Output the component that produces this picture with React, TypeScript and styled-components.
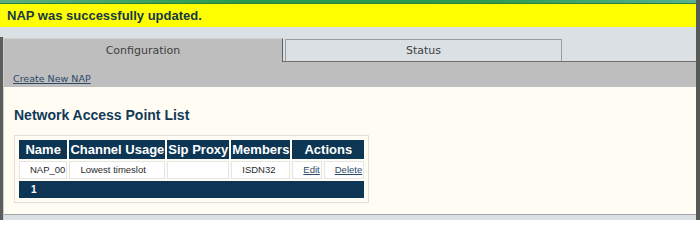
import styled, { createGlobalStyle } from "styled-components"

const GlobalStyle = createGlobalStyle`
  html, body {
    margin: 0;
    padding: 0;
    background: #ffffff;
  }
`

const navy = "#0c3654"
const linkBlue = "#2b4867"
const sans = `"Liberation Sans", Arial, sans-serif`
const dejavu = `"DejaVu Sans", Verdana, sans-serif`

type Nap = { name: string; usage: string; proxy: string; members: string }

const naps: Nap[] = [
  { name: "NAP_00", usage: "Lowest timeslot", proxy: "", members: "ISDN32" },
]

export default function App() {
  return <>
    <GlobalStyle/>
    <Page>
      <TopStrip/>
      <Banner>NAP was successfully updated.</Banner>
      <Spacer/>
      <Main>
        <Column>
          <TabRow>
            <Tab active>Configuration</Tab>
            <InactiveTabs>
              <Tab>Status</Tab>
            </InactiveTabs>
          </TabRow>
          <Toolbar>
            <Link href="#">Create New NAP</Link>
          </Toolbar>
          <Content>
            <Heading>Network Access Point List</Heading>
            <TableBox>
              <Grid>
                <thead>
                  <tr>
                    <HeadCell>Name</HeadCell>
                    <HeadCell>Channel Usage</HeadCell>
                    <HeadCell>Sip Proxy</HeadCell>
                    <HeadCell>Members</HeadCell>
                    <HeadCell colSpan={2}>Actions</HeadCell>
                  </tr>
                </thead>
                <tbody>
                  {naps.map(nap => <tr key={nap.name}>
                    <Cell>{nap.name}</Cell>
                    <Cell>{nap.usage}</Cell>
                    <Cell>{nap.proxy}</Cell>
                    <Cell>{nap.members}</Cell>
                    <Cell><CellLink href="#">Edit</CellLink></Cell>
                    <Cell><CellLink href="#">Delete</CellLink></Cell>
                  </tr>)}
                </tbody>
                <tfoot>
                  <tr>
                    <FootCell colSpan={6}>1</FootCell>
                  </tr>
                </tfoot>
              </Grid>
            </TableBox>
          </Content>
          <Bottom/>
        </Column>
      </Main>
    </Page>
  </>
}

const Page = styled.div`
  width: 700px;
  height: 220px;
  box-sizing: border-box;
  border-right: 4px solid #565a56;
  display: flex;
  flex-direction: column;
  overflow: hidden;
  background: #dae0e4;
`
const TopStrip = styled.div`
  height: 4px;
  flex-shrink: 0;
  background: linear-gradient(to right, #5fae80, #2a9a48 35%, #2f9b4b 70%, #58b190);
  border-bottom: 1px solid #2c7e42;
  box-sizing: border-box;
`
const Banner = styled.div`
  height: 23px;
  flex-shrink: 0;
  background: #ffff00;
  color: #14384c;
  font: bold 13px/23px ${sans};
  padding-left: 7px;
`
const Spacer = styled.div`
  height: 10px;
  flex-shrink: 0;
  background: #dae0e4;
`
const Main = styled.div`
  flex: 1;
  display: flex;
  border-left: 3px solid #5b5e5b;
  padding-left: 1px;
  background: #c9cdcb;
`
const Column = styled.div`
  flex: 1;
  display: flex;
  flex-direction: column;
  background: #dae0e4;
`
const TabRow = styled.div`
  height: 25px;
  display: flex;
  align-items: flex-end;
`
const InactiveTabs = styled.div`
  flex: 1;
  height: 23px;
  box-sizing: border-box;
  display: flex;
  align-items: flex-end;
  padding-left: 2px;
  border-bottom: 1px solid #6f6f6f;
`
const Tab = styled.div<{ active?: boolean }>`
  box-sizing: border-box;
  display: flex;
  align-items: center;
  justify-content: center;
  font: 11px/13px ${dejavu};
  color: #3f3f3f;
  width: ${p => p.active ? "279px" : "277px"};
  height: ${p => p.active ? "24px" : "22px"};
  background: ${p => p.active ? "#bebebe" : "#dae0e4"};
  border-top: 1px solid ${p => p.active ? "#d0d0d0" : "#9c9c9c"};
  border-right: 1px solid ${p => p.active ? "#5f5f5f" : "#9c9c9c"};
  border-left: ${p => p.active ? "none" : "1px solid #9c9c9c"};
`
const Toolbar = styled.div`
  height: 25px;
  box-sizing: border-box;
  background: #bebebe;
  padding: 6px 0 0 9px;
`
const Link = styled.a`
  font: 9.5px/11px ${dejavu};
  color: ${linkBlue};
  text-decoration: underline;
`
const Content = styled.div`
  height: 127px;
  box-sizing: border-box;
  background: #fffcf3;
  padding: 20px 0 0 10px;
`
const Heading = styled.h2`
  margin: 0 0 12px;
  font: bold 14px/16px ${sans};
  color: #113a58;
`
const TableBox = styled.div`
  display: inline-block;
  border: 1px solid #e0dfd8;
  padding: 2px;
`
const Grid = styled.table`
  border-collapse: separate;
  border-spacing: 2px;
  font-family: ${sans};
`
const HeadCell = styled.th`
  background: ${navy};
  color: #ffffff;
  font: bold 13px/15px ${sans};
  padding: 2px 1px;
  white-space: nowrap;
  text-align: center;
`
const Cell = styled.td`
  background: #ffffff;
  border: 1px solid #e6e6e6;
  font: 9.5px/16px ${sans};
  color: #2a2a2a;
  padding: 0 1px 0 10px;
  white-space: nowrap;
  text-align: left;
`
const CellLink = styled.a`
  color: ${linkBlue};
  text-decoration: underline;
`
const FootCell = styled.td`
  background: ${navy};
  color: #ffffff;
  font: bold 10px/13px ${sans};
  padding: 2px 0 2px 12px;
`
const Bottom = styled.div`
  flex: 1;
  border-top: 1px solid #a2a6aa;
  background: #dae0e4;
`
